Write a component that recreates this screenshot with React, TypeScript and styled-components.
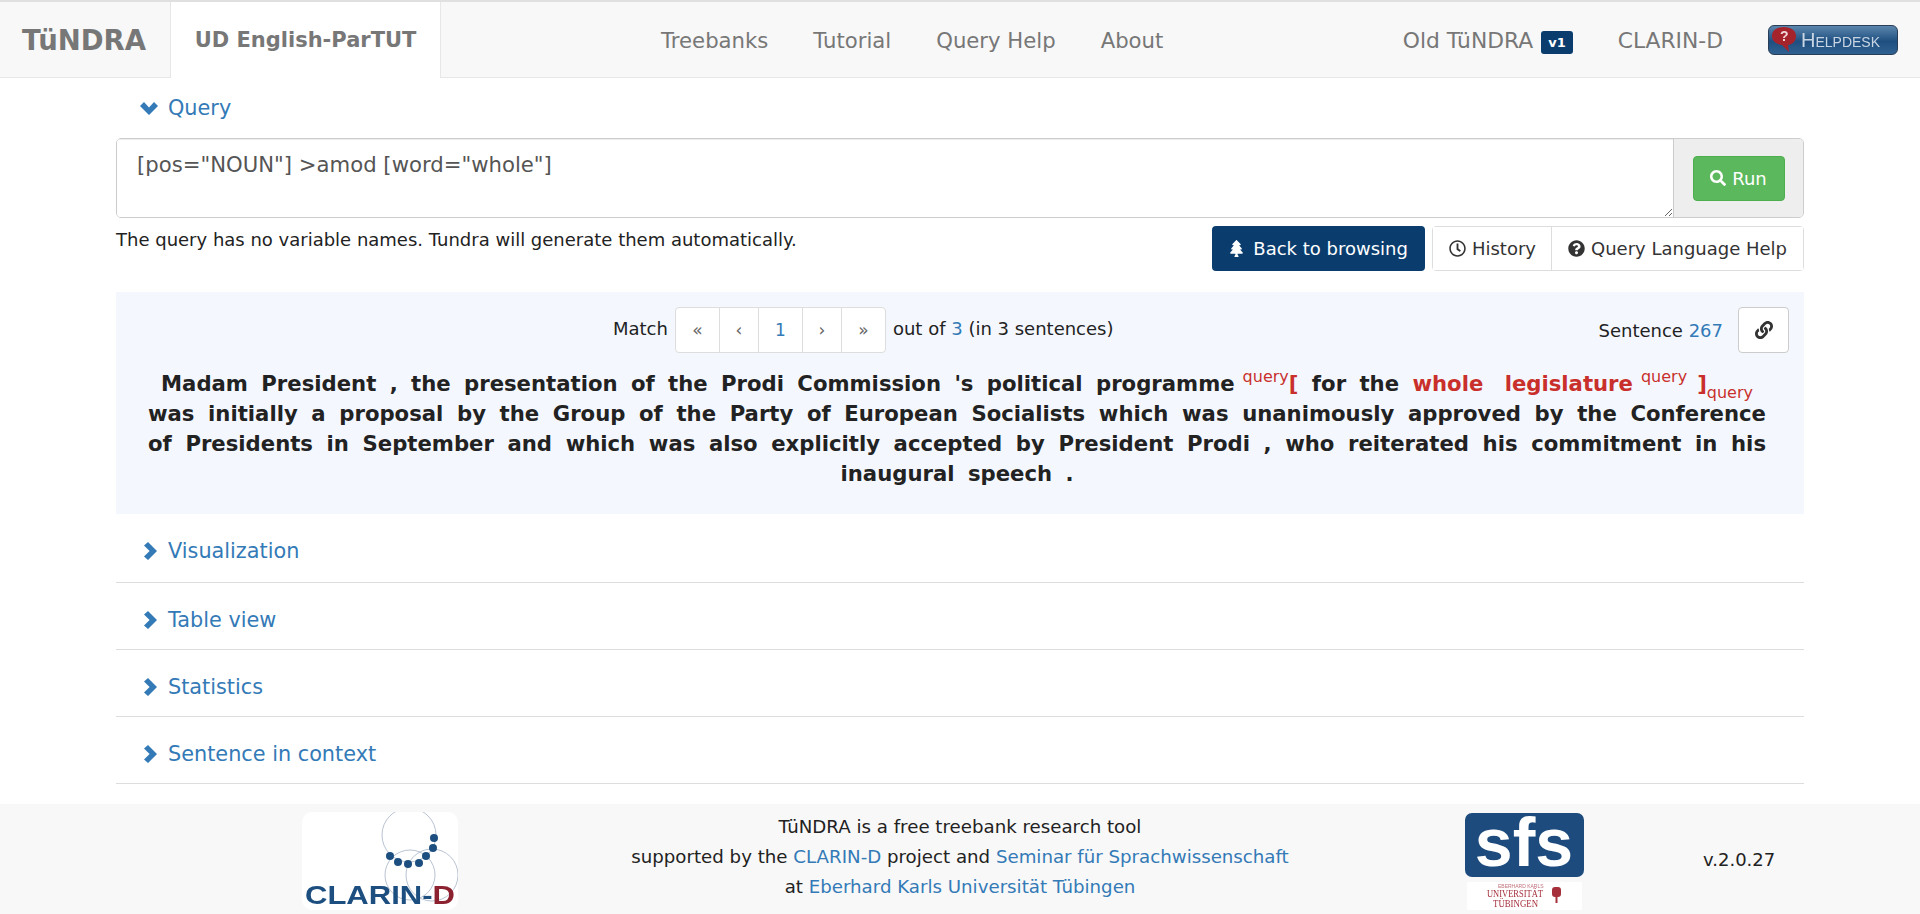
import React from 'react'
import styled, { createGlobalStyle } from 'styled-components'
import { FaLink, FaQuestionCircle, FaRegClock, FaSearch, FaTree } from 'react-icons/fa'

const GlobalStyle = createGlobalStyle`
  html, body {
    margin: 0;
    padding: 0;
    background: #fff;
  }
  body {
    font-family: "DejaVu Sans", Verdana, sans-serif;
    font-size: 18px;
    color: #222;
  }
  * {
    box-sizing: border-box;
  }
`
const Page = styled.div`
  display: flex;
  flex-direction: column;
  height: 914px;
  overflow: hidden;
  border-top: 2px solid #e0e0e0;
`
const NavBar = styled.nav`
  display: flex;
  align-items: stretch;
  height: 76px;
  flex: none;
  padding-top: 1px;
  background: #f8f8f8;
  border-bottom: 1px solid #e7e7e7;
`
const Brand = styled.a`
  display: flex;
  align-items: center;
  flex: none;
  width: 170px;
  padding-left: 22px;
  font-size: 27.5px;
  font-weight: 700;
  color: #777;
`
const ActiveTab = styled.a`
  display: flex;
  align-items: center;
  justify-content: center;
  flex: none;
  width: 271px;
  margin: -1px 0 -1px;
  font-size: 21px;
  font-weight: 700;
  white-space: nowrap;
  color: #777;
  background: #fff;
  border-left: 1px solid #e7e7e7;
  border-right: 1px solid #e7e7e7;
`
const NavLinks = styled.div`
  display: flex;
  align-items: center;
  gap: 45px;
  margin-left: 220px;
`
const NavLink = styled.a`
  font-size: 21.2px;
  color: #777;
`
const NavRight = styled.div`
  display: flex;
  align-items: center;
  margin-left: auto;
  margin-right: 22px;
`
const RightLink = styled(NavLink)`
  font-size: 21.8px;
`
const VersionBadge = styled.span`
  display: inline-block;
  margin-left: 8px;
  padding: 4px 7px;
  font-size: 13px;
  line-height: 15px;
  font-weight: 700;
  color: #fff;
  background: #0a3d6e;
  border-radius: 3px;
  position: relative;
  top: 2px;
`
const ClarinLink = styled(RightLink)`
  margin-left: 45px;
`
const HelpdeskButton = styled.a`
  display: flex;
  align-items: center;
  flex: none;
  width: 130px;
  height: 30px;
  margin-left: 45px;
  padding-left: 3px;
  gap: 5px;
  border-radius: 6px;
  border: 1px solid #2a3f57;
  background: linear-gradient(#5b86ad, #1f4f80 55%, #2f6191);
  color: #c8d6e4;
  font-family: "Liberation Sans", Arial, sans-serif;
  font-size: 20px;
  font-variant: small-caps;
  filter: blur(0.4px);
  svg {
    flex: none;
  }
`
const Content = styled.main`
  flex: 1;
  margin: 0 116px;
`
const SectionTitle = styled.a`
  display: flex;
  align-items: center;
  gap: 11px;
  height: 60px;
  padding-left: 28px;
  font-size: 20.8px;
  color: #337ab7;
  svg {
    flex: none;
  }
`
const QueryTitle = styled(SectionTitle)`
  gap: 10px;
  padding-left: 24px;
`
const QueryGroup = styled.div`
  display: flex;
  height: 80px;
  border: 1px solid #ccc;
  border-radius: 5px;
  overflow: hidden;
`
const QueryInput = styled.textarea`
  flex: 1;
  padding: 12px 20px;
  font-family: inherit;
  font-size: 21.2px;
  line-height: 28px;
  color: #555;
  border: 0;
  outline: none;
  box-shadow: inset 0 1px 1px rgba(0, 0, 0, 0.075);
`
const QueryAddon = styled.div`
  display: flex;
  align-items: center;
  justify-content: center;
  width: 130px;
  background: #eee;
  border-left: 1px solid #ccc;
`
const RunButton = styled.button`
  display: flex;
  align-items: center;
  justify-content: center;
  gap: 6px;
  width: 92px;
  height: 45px;
  padding: 0;
  font-family: inherit;
  font-size: 18px;
  color: #fff;
  background: #5cb85c;
  border: 1px solid #4cae4c;
  border-radius: 4px;
`
const QueryFooter = styled.div`
  display: flex;
  justify-content: space-between;
  align-items: flex-start;
  margin-top: 8px;
`
const Hint = styled.div`
  line-height: 20px;
  padding-top: 4px;
`
const Actions = styled.div`
  display: flex;
  gap: 7px;
`
const BackButton = styled.button`
  display: flex;
  align-items: center;
  gap: 8px;
  height: 45px;
  padding: 0 17px 0 16px;
  font-family: inherit;
  font-size: 18px;
  color: #fff;
  background: #0a3d6e;
  border: 0;
  border-radius: 4px;
  white-space: nowrap;
`
const ButtonGroup = styled.div`
  display: flex;
  height: 45px;
  border: 1px solid #ddd;
  border-radius: 4px;
`
const GroupButton = styled.button`
  display: flex;
  align-items: center;
  gap: 6px;
  padding: 0 15px 0 16px;
  font-family: inherit;
  font-size: 18px;
  color: #333;
  background: #fff;
  border: 0;
  white-space: nowrap;
  & + & {
    border-left: 1px solid #ddd;
    padding: 0 16px;
  }
`
const MatchPanel = styled.section`
  margin-top: 21px;
  height: 222px;
  padding: 15px 38px 0 32px;
  background: #f4f8fe;
`
const MatchBar = styled.div`
  display: flex;
  align-items: center;
  height: 46px;
  margin-right: -23px;
`
const MatchInfo = styled.div`
  flex: 1;
  display: flex;
  justify-content: center;
  align-items: center;
  gap: 7px;
  padding-right: 20px;
`
const MatchText = styled.span`
  padding-bottom: 4px;
`
const Pager = styled.div`
  display: flex;
  height: 46px;
  background: #fff;
  border: 1px solid #ddd;
  border-radius: 4px;
`
const PagerCell = styled.span<{ $width: number; $current?: boolean }>`
  display: flex;
  align-items: center;
  justify-content: center;
  width: ${({ $width }) => $width}px;
  font-size: 17px;
  color: ${({ $current }) => ($current ? '#337ab7' : '#666')};
  & + & {
    border-left: 1px solid #ddd;
  }
`
const BlueLink = styled.a`
  color: #337ab7;
`
const SentenceRef = styled.div`
  flex: none;
  display: flex;
  align-items: center;
  gap: 15px;
`
const LinkButton = styled.button`
  display: flex;
  align-items: center;
  justify-content: center;
  width: 51px;
  height: 46px;
  padding: 0;
  color: #333;
  background: #fff;
  border: 1px solid #ccc;
  border-radius: 4px;
`
const Sentence = styled.p`
  margin: 16px 0 0;
  font-size: 21.2px;
  line-height: 30px;
  font-weight: 700;
  text-align: justify;
  text-align-last: center;
  word-spacing: 6px;
  color: #222;
`
const Hit = styled.span<{ $gap?: boolean }>`
  color: #c9302c;
  margin-left: ${({ $gap }) => ($gap ? '8px' : '0')};
`
const Mark = styled.span<{ $low?: boolean; $before?: number; $after?: number }>`
  position: relative;
  top: ${({ $low }) => ($low ? '7px' : '-9px')};
  margin-left: ${({ $before }) => $before ?? 0}px;
  margin-right: ${({ $after }) => $after ?? 0}px;
  font-size: 16px;
  font-weight: 400;
  line-height: 0;
  color: #c9302c;
`
const Section = styled.div`
  height: 67px;
  padding-top: 7px;
  border-bottom: 1px solid #ddd;
`
const FirstSection = styled(Section)`
  height: 69px;
`
const Footer = styled.footer`
  display: flex;
  align-items: center;
  flex: none;
  height: 110px;
  background: #f8f8f8;
`
const ClarinLogo = styled.svg`
  flex: none;
  width: 156px;
  height: 98px;
  margin: 4px 0 0 302px;
  filter: blur(0.5px);
`
const FooterText = styled.div`
  flex: none;
  width: 700px;
  margin: -4px 0 0 152px;
  font-size: 18.2px;
  text-align: center;
  line-height: 30px;
`
const SfsLogo = styled.svg`
  flex: none;
  width: 119px;
  height: 97px;
  margin: 5px 0 0 155px;
  filter: blur(0.5px);
`
const Version = styled.div`
  margin-left: 119px;
`
const ChevronIcon = styled.svg<{ $down?: boolean }>`
  width: ${({ $down }) => ($down ? '18px' : '13px')};
  height: ${({ $down }) => ($down ? '13px' : '18px')};
`

function Chevron({ down }: { down?: boolean }) {
  return (
    <ChevronIcon $down={down} viewBox={down ? '0 0 18 13' : '0 0 13 18'}>
      <path
        d={down ? 'M0 4L4 0 9 5.600 14 0 18 4 9 13z' : 'M4 0L13 9 4 18 0 14.500 5.600 9 0 3.500z'}
        fill="#337ab7"
      />
    </ChevronIcon>
  )
}

function ClarinMark() {
  const dots = [[132, 26], [131, 36], [124, 44], [117, 51], [106, 52], [96, 50], [88, 44]]
  return (
    <ClarinLogo viewBox="0 0 156 98">
      <rect width="156" height="98" rx="10" fill="#fff" />
      <g fill="none" stroke="#b9c3d2" strokeWidth="1">
        <circle cx="107" cy="23" r="27" />
        <circle cx="108" cy="63" r="25" />
        <circle cx="130" cy="63" r="26" />
      </g>
      {dots.map(([cx, cy]) => (
        <circle key={cx} cx={cx} cy={cy} r="4" fill="#1d4e80" />
      ))}
      <text x="3" y="92" fontFamily="Liberation Sans" fontWeight="700" fontSize="26" textLength="150" lengthAdjust="spacingAndGlyphs" fill="#1d4e80">
        CLARIN-<tspan fill="#8c2230">D</tspan>
      </text>
    </ClarinLogo>
  )
}

function SfsMark() {
  return (
    <SfsLogo viewBox="0 0 119 97">
      <rect width="119" height="64" rx="7" fill="#1d4b7d" />
      <text x="59" y="53" textAnchor="middle" fontFamily="Liberation Sans" fontWeight="700" fontSize="68" fill="#fff">
        sfs
      </text>
      <rect x="2" y="69" width="115" height="28" fill="#fff" />
      <text x="33" y="75" fontFamily="Liberation Sans" fontSize="5" fill="#c0707a">EBERHARD KARLS</text>
      <text x="22" y="84" fontFamily="Liberation Serif" fontSize="10" textLength="56" lengthAdjust="spacingAndGlyphs" fill="#a5303c">UNIVERSITÄT</text>
      <text x="28" y="94" fontFamily="Liberation Serif" fontSize="10" textLength="45" lengthAdjust="spacingAndGlyphs" fill="#a5303c">TÜBINGEN</text>
      <rect x="87" y="74" width="9" height="10" rx="3" fill="#a5303c" />
      <rect x="90.5" y="84" width="2" height="6" fill="#a5303c" />
    </SfsLogo>
  )
}

function HelpBubble() {
  return (
    <svg width="24" height="28" viewBox="0 0 24 28">
      <path d="M12 1c7 0 12 3.500 12 9s-4 8.500-8 9l1 7-7-7C4 18 0 15 0 10 0 4.500 5 1 12 1z" fill="#a5242c" />
      <text x="8" y="15" fontFamily="Liberation Sans" fontWeight="700" fontSize="14" fill="#f3d8d8">?</text>
    </svg>
  )
}

export default function App() {
  return (
    <Page>
      <GlobalStyle />
      <NavBar>
        <Brand>TüNDRA</Brand>
        <ActiveTab>UD English-ParTUT</ActiveTab>
        <NavLinks>
          <NavLink>Treebanks</NavLink>
          <NavLink>Tutorial</NavLink>
          <NavLink>Query Help</NavLink>
          <NavLink>About</NavLink>
        </NavLinks>
        <NavRight>
          <RightLink>Old TüNDRA</RightLink>
          <VersionBadge>v1</VersionBadge>
          <ClarinLink>CLARIN-D</ClarinLink>
          <HelpdeskButton>
            <HelpBubble />
            Helpdesk
          </HelpdeskButton>
        </NavRight>
      </NavBar>
      <Content>
        <QueryTitle>
          <Chevron down />
          Query
        </QueryTitle>
        <QueryGroup>
          <QueryInput defaultValue={'[pos="NOUN"] >amod [word="whole"]'} />
          <QueryAddon>
            <RunButton>
              <FaSearch size={16} />
              Run
            </RunButton>
          </QueryAddon>
        </QueryGroup>
        <QueryFooter>
          <Hint>The query has no variable names. Tundra will generate them automatically.</Hint>
          <Actions>
            <BackButton>
              <FaTree size={17} />
              Back to browsing
            </BackButton>
            <ButtonGroup>
              <GroupButton>
                <FaRegClock size={17} />
                History
              </GroupButton>
              <GroupButton>
                <FaQuestionCircle size={17} />
                Query Language Help
              </GroupButton>
            </ButtonGroup>
          </Actions>
        </QueryFooter>
        <MatchPanel>
          <MatchBar>
            <MatchInfo>
              <MatchText>Match</MatchText>
              <Pager>
                <PagerCell $width={43}>«</PagerCell>
                <PagerCell $width={39}>‹</PagerCell>
                <PagerCell $width={44} $current>1</PagerCell>
                <PagerCell $width={39}>›</PagerCell>
                <PagerCell $width={44}>»</PagerCell>
              </Pager>
              <MatchText>
                out of <BlueLink>3</BlueLink> (in 3 sentences)
              </MatchText>
            </MatchInfo>
            <SentenceRef>
              <span>
                Sentence <BlueLink>267</BlueLink>
              </span>
              <LinkButton>
                <FaLink size={18} />
              </LinkButton>
            </SentenceRef>
          </MatchBar>
          <Sentence>
            Madam President , the presentation of the Prodi Commission 's political programme
            <Mark $before={8}>query</Mark>
            <Hit>[</Hit> for the <Hit>whole</Hit> <Hit $gap>legislature</Hit>
            <Mark $before={8} $after={10}>query</Mark>
            <Hit>]</Hit>
            <Mark $low>query</Mark>
            <br />
            was initially a proposal by the Group of the Party of European Socialists which was unanimously approved by
            the Conference of Presidents in September and which was also explicitly accepted by President Prodi , who
            reiterated his commitment in his inaugural speech .
          </Sentence>
        </MatchPanel>
        <FirstSection>
          <SectionTitle>
            <Chevron />
            Visualization
          </SectionTitle>
        </FirstSection>
        <Section>
          <SectionTitle>
            <Chevron />
            Table view
          </SectionTitle>
        </Section>
        <Section>
          <SectionTitle>
            <Chevron />
            Statistics
          </SectionTitle>
        </Section>
        <Section>
          <SectionTitle>
            <Chevron />
            Sentence in context
          </SectionTitle>
        </Section>
      </Content>
      <Footer>
        <ClarinMark />
        <FooterText>
          TüNDRA is a free treebank research tool
          <br />
          supported by the <BlueLink>CLARIN-D</BlueLink> project and <BlueLink>Seminar für Sprachwissenschaft</BlueLink>
          <br />
          at <BlueLink>Eberhard Karls Universität Tübingen</BlueLink>
        </FooterText>
        <SfsMark />
        <Version>v.2.0.27</Version>
      </Footer>
    </Page>
  )
}
